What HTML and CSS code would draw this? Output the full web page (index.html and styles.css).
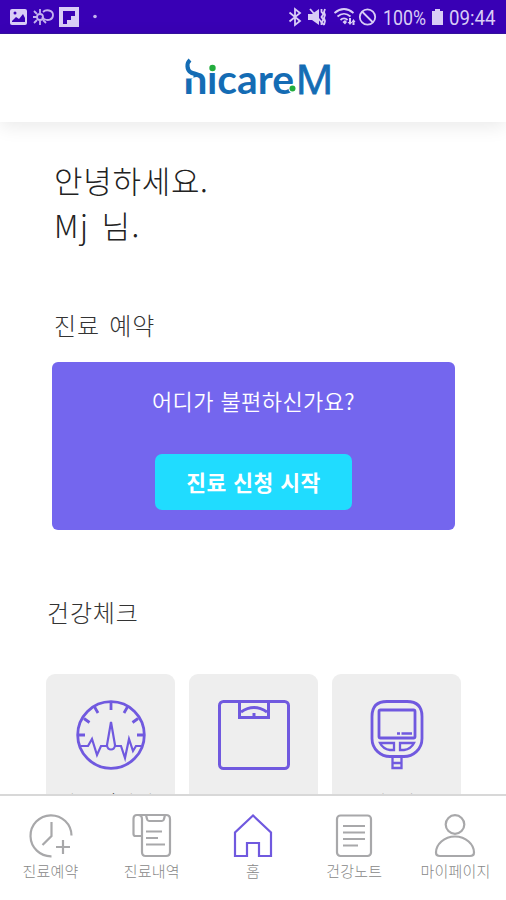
FILE: index.html
```html
<!DOCTYPE html>
<html lang="ko">
<head>
<meta charset="utf-8">
<title>hicare.M</title>
<link rel="stylesheet" href="styles.css">
</head>
<body>
<div class="app">
  <div class="status">
    <svg class="status-left" width="110" height="34" viewBox="0 0 110 34">
      <rect x="10" y="9" width="17" height="16" rx="2" fill="#d9cdf6"/>
      <path d="M12 21l4-4 3 2 4-5 2 4v4H12z" fill="#3900b5"/><circle cx="15" cy="13" r="1.5" fill="#3900b5"/>
      <g fill="none" stroke="#c4b2ee" stroke-width="1.8"><circle cx="40" cy="17" r="3"/><path d="M40 9v4M40 21v4M34 11l3 3M34 23l3-3M33 17h4M43 20l3 3"/><path d="M43 12c3-3 10-2 10 3s-5 6-9 4l-2-2"/></g>
      <rect x="59" y="7" width="20" height="20" fill="#d9cdf6"/>
      <path d="M63 11h12v5h-4v4h-4v4h-4z" fill="#3900b5"/>
      <circle cx="95" cy="16.500" r="1.800" fill="#c4b2ee"/>
    </svg>
    <svg class="status-right" width="220" height="34" viewBox="286 0 220 34">
      <g fill="none" stroke="#d9cdf6" stroke-width="1.800">
        <path d="M289.500 12.500l10.500 8.500-5 4V9l5 4-10.500 8.500"/>
        <path d="M310 9l14 16"/>
        <path d="M321.500 9v3l2 2-2 3 2 3-2 2v3M325 9l-1 3 1 3-1 3 1 3-1 4"/>
        <path d="M334.500 13c6-5 13-5 19 0M337.500 16.500c4-3.500 9-3.500 13 0M340.500 20c2-2 5-2 7 0"/>
        <circle cx="367.500" cy="17" r="7.700"/><path d="M362 11.500l11 11"/>
      </g>
      <path d="M308 14h4l7-5v16l-7-5h-4zM342.500 22l2.500-2 2 2-2 2.500zM349 18h2v4h1.500l-2.500 3-2.500-3h1.500zM353.500 19l2 3h-1v3h-2v-3h-1zM432 11h3V9h5v2h3v14h-11z" fill="#d9cdf6"/>
      <text x="383" y="24.500" textLength="43" lengthAdjust="spacingAndGlyphs">100%</text>
      <text x="449" y="24.500" textLength="46.500" lengthAdjust="spacingAndGlyphs">09:44</text>
    </svg>
  </div>
  <header class="topbar">
    <svg class="logo" width="158" height="60" viewBox="178 48 158 60">
      <g fill="#146cb4">
        <text class="word" x="183.500" y="94" textLength="24" lengthAdjust="spacingAndGlyphs">h</text>
        <text class="word" x="207" y="94" textLength="87" lengthAdjust="spacingAndGlyphs">icare</text>
        <text class="mark" x="295.500" y="94" textLength="38" lengthAdjust="spacingAndGlyphs">M</text>
      </g>
      <path d="M184 58h9.500v20.500H184z" fill="#fff"/>
      <path d="M190 60c-3.500 3-3.500 10 1 12.500 3 1.500 6 1 9 3.500" fill="none" stroke="#146cb4" stroke-width="4.200"/>
      <circle cx="212.500" cy="66.500" r="5" fill="#fff"/>
      <circle cx="212.500" cy="68" r="3.200" fill="#22ad3d"/>
      <circle cx="292.500" cy="88.500" r="4" fill="#fff"/>
      <circle cx="292.500" cy="88.500" r="3" fill="#22ad3d"/>
    </svg>
  </header>
  <main class="content">
    <h1 class="greeting">안녕하세요.<br><span class="name">Mj 님.</span></h1>
    <h2 class="title">진료 예약</h2>
    <section class="booking">
      <p class="question">어디가 불편하신가요?</p>
      <button class="start">진료 신청 시작</button>
    </section>
    <h2 class="title title-check">건강체크</h2>
    <div class="cards">
      <div class="card">
        <svg width="72" height="72" viewBox="0 0 72 72"><g fill="none" stroke="#7059df" stroke-width="2.800"><circle cx="36" cy="36" r="33.300"/><path d="M36 3v8M19 7l4 7M53 7l-4 7M9 19.500l5.500 4M63 19.500l-5.500 4M3 36h7M69 36h-7"/><path stroke-width="2.200" d="M6 47h7l4-7 5 16 4-9h6M40 47h6l4 12 4-19 4 12 3-5h5M36 23l-4 23c0 6 8 6 8 0z"/></g></svg>
        <span>혈압/맥박</span>
      </div>
      <div class="card">
        <svg width="72" height="72" viewBox="0 0 72 72"><g fill="none" stroke="#7059df" stroke-width="3"><rect x="1.500" y="2.500" width="69" height="67" rx="4"/><path d="M21.500 3v15.500h29V3M23 13q13-9 26 0M36 14v4"/></g></svg>
        <span>체중</span>
      </div>
      <div class="card">
        <svg width="72" height="72" viewBox="0 0 72 72"><g fill="none" stroke="#7059df" stroke-width="2.800"><path d="M26 2.500h20q15 0 15 15v22c0 11-9 18-18 18H29c-9 0-18-7-18-18v-22q0-15 15-15z"/><rect x="18" y="11" width="36" height="28" rx="1.500"/><path stroke-width="2.300" d="M19 44h14v7h-4q-7-1-10-7zM53 44H39v7h4q7-1 10-7zM31.500 58v11h9V58M32 64h8"/><path stroke-width="2.300" d="M36 34.500h3M40.500 34.500H51"/></g></svg>
        <span>혈당</span>
      </div>
    </div>
  </main>
  <nav class="tabs">
    <a class="tab"><svg width="44" height="46" viewBox="0 0 44 46"><path d="M22.500 43.300A20.500 20.500 0 1 1 42.500 22.500M22.500 9v14l-9 9M34 27v14M27 34h14"/></svg><span>진료예약</span></a>
    <a class="tab"><svg width="44" height="46" viewBox="0 0 44 46"><path d="M12 6q0-4-4-4H7Q3.500 2 3.500 6v15q0 2 2 2H12M7 2h29q4 0 4 4v33q0 4-4 4H15.500q-3.500 0-3.500-4V6M16 2l1 4q.5 2 2 2h13q1.500 0 2-2l1-4M16 18.500h16M16 25h12M16 31.500h19"/></svg><span>진료내역</span></a>
    <a class="tab active"><svg width="44" height="46" viewBox="0 0 44 46"><path d="M22 2.500L4 19.500V43h12V30h12v13h12V19.500z"/></svg><span>홈</span></a>
    <a class="tab"><svg width="44" height="46" viewBox="0 0 44 46"><rect x="5" y="2.500" width="34" height="40.500" rx="3.500"/><path d="M11 13h22M11 19.500h22M11 26h22M11 32.500h15"/></svg><span>건강노트</span></a>
    <a class="tab"><svg width="44" height="46" viewBox="0 0 44 46"><circle cx="22" cy="11.500" r="9.300"/><path d="M22 23.500c11 0 19 8 19 16q0 3.500-4 3.500H7q-4 0-4-3.500c0-8 8-16 19-16z"/></svg><span>마이페이지</span></a>
  </nav>
</div>
</body>
</html>
```
FILE: styles.css
```css
* { box-sizing: border-box; }
body { margin: 0; background: #fff; font-family: "Noto Sans CJK KR", sans-serif; font-weight: 300; }
h1, h2, p { margin: 0; font-weight: 300; }
svg { display: block; flex: none; }
.app { width: 506px; height: 900px; display: flex; flex-direction: column; overflow: hidden; }
.status { height: 34px; flex: none; display: flex; justify-content: space-between; background: #3900b5; border-bottom: 1px solid #3512a0; }
.status-right text { font: 400 21px Roboto, sans-serif; fill: #d9cdf6; }
.topbar { height: 88px; flex: none; display: flex; justify-content: center; padding: 14px 0 0 8px; background: #fff; box-shadow: 0 4px 18px rgba(0, 0, 0, .09); z-index: 1; }
.word { font: 700 40px Lato, sans-serif; }
.mark { font: 400 41px "Open Sans", sans-serif; stroke: #146cb4; stroke-width: .8px; }
.content { flex: 1; min-height: 0; overflow: hidden; padding: 35px 45px 0 46px; }
.greeting { margin-left: 8px; font-size: 31px; line-height: 45px; letter-spacing: .7px; color: #222; }
.name { letter-spacing: 1.500px; word-spacing: 2px; }
.title { margin: 60px 0 0 8px; font-size: 24px; line-height: 36px; letter-spacing: .8px; word-spacing: 2px; color: #333; }
.booking { height: 168px; margin: 19px 6px 0; border-radius: 6px; background: #7466ee; display: flex; flex-direction: column; align-items: center; padding-top: 22px; }
.question { font-size: 22px; line-height: 32px; letter-spacing: .4px; font-weight: 350; color: #fff; }
.start { width: 197px; height: 56px; margin-top: 38px; border: 0; border-radius: 7px; background: #20dcff; color: #fff; font: 700 21.500px/54px "Noto Sans CJK KR", sans-serif; letter-spacing: .5px; padding: 0; }
.title-check { margin: 64px 0 0 1px; }
.cards { display: grid; grid-template-columns: repeat(3, 129px); column-gap: 14px; margin-top: 44px; }
.card { height: 150px; border-radius: 9px; background: #eee; display: flex; flex-direction: column; align-items: center; padding-top: 25px; }
.card span { margin-top: 15px; font-size: 21px; line-height: 32px; letter-spacing: .8px; color: #444; }
.tabs { height: 106px; flex: none; display: grid; grid-template-columns: repeat(5, 1fr); border-top: 2px solid #d8d8d8; background: #fff; padding-top: 17px; }
.tab { display: flex; flex-direction: column; align-items: center; color: #888; }
.tab svg { fill: none; stroke: #a8a8aa; stroke-width: 2.200; }
.tab.active svg { stroke: #7059df; }
.tab span { font-size: 15px; line-height: 20px; margin-top: 2px; letter-spacing: .2px; }
```
